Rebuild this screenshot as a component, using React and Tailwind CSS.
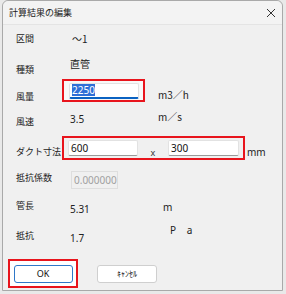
import React from 'react';

const jp = { fontFamily: '"Noto Sans CJK JP", "Noto Sans", sans-serif' };
const ui = { fontFamily: '"Noto Sans", "Noto Sans CJK JP", sans-serif' };

function Label({ children, top = 0 }) {
  return (
    <div className="w-[46px] shrink-0 text-[9px] leading-none text-[#222]" style={{ ...jp, marginTop: top }}>
      {children}
    </div>
  );
}

function TextBox({ value, width, selected }) {
  return (
    <div
      className={`h-[16px] bg-white border border-[#e2e2e2] flex items-center px-[2px] text-[10px] text-[#111] rounded-[2px] ${
        selected ? 'border-b-2 border-b-[#0a62c2]' : 'border-b-[#9a9a9a]'
      }`}
      style={{ ...ui, width }}
    >
      {selected ? <span className="bg-[#2f6fd6] text-white leading-[12px]">{value}</span> : value}
    </div>
  );
}

export default function App() {
  return (
    <div className="w-[286px] h-[294px] bg-[#e9e9e9] pl-[2px] pr-[3px] pb-[3px]">
      <div className="w-full h-full bg-[#f0f0f0] border border-[#a9a9a9] rounded-t-[6px] flex flex-col">
        {/* タイトルバー */}
        <div className="h-[24px] shrink-0 flex items-center justify-between pl-[6px] pr-[6px] bg-[#f3f3f3] border-b border-[#e4e4e4] rounded-t-[6px]">
          <span className="text-[9px] text-[#222]" style={jp}>計算結果の編集</span>
          <svg width="10" height="10" viewBox="0 0 10 10">
            <path d="M1 1 L9 9 M9 1 L1 9" stroke="#333" strokeWidth="1" />
          </svg>
        </div>

        <div className="pl-[13px] flex flex-col">
          {/* 区間 */}
          <div className="h-[28px] flex items-start">
            <Label top={9}>区間</Label>
            <div className="ml-[10px] mt-[9px] text-[10px] leading-none text-[#222]" style={jp}>～1</div>
          </div>

          {/* 種類 */}
          <div className="h-[20px] flex items-start">
            <Label top={12}>種類</Label>
            <div className="ml-[8px] mt-[6px] text-[10px] leading-none text-[#222]" style={jp}>直管</div>
          </div>

          {/* 風量 */}
          <div className="h-[32px] flex items-start">
            <Label top={19}>風量</Label>
            <div className="mt-[6px] border-2 border-[#e8141c] bg-[#f8f8f8] w-[83px] h-[23px] flex items-center pl-[5px]">
              <TextBox value="2250" width={70} selected />
            </div>
            <div className="ml-[13px] mt-[14px] text-[10px] text-[#222]" style={jp}>m3／h</div>
          </div>

          {/* 風速 */}
          <div className="h-[30px] flex items-start">
            <Label top={12}>風速</Label>
            <div className="ml-[8px] w-[88px] mt-[9px] text-[10px] leading-none text-[#222]" style={ui}>3.5</div>
            <div className="mt-[7px] text-[10px] leading-none text-[#222]" style={jp}>m／s</div>
          </div>

          {/* ダクト寸法 */}
          <div className="h-[30px] flex items-start">
            <Label top={12}>ダクト寸法</Label>
            <div className="mt-[1px] border-2 border-[#e8141c] w-[183px] h-[24px] flex items-center pl-[4px]">
              <TextBox value="600" width={70} />
              <div className="w-[30px] text-center text-[9px] text-[#333] mt-[9px]" style={ui}>x</div>
              <TextBox value="300" width={71} />
            </div>
            <div className="ml-[2px] mt-[12px] text-[10px] leading-none text-[#222]" style={ui}>mm</div>
          </div>

          {/* 抵抗係数 */}
          <div className="h-[25px] flex items-start">
            <Label top={8}>抵抗係数</Label>
            <div
              className="ml-[9px] mt-[6px] w-[47px] h-[18px] border border-[#dedede] bg-[#f0f0f0] flex items-center px-[2px] text-[10px] text-[#a0a0a0]"
              style={ui}
            >
              0.000000
            </div>
          </div>

          {/* 管長 */}
          <div className="h-[30px] flex items-start">
            <Label top={11}>管長</Label>
            <div className="ml-[8px] w-[88px] mt-[14px] text-[10px] leading-none text-[#222]" style={ui}>5.31</div>
            <div className="ml-[5px] mt-[12px] text-[10px] leading-none text-[#222]" style={ui}>m</div>
          </div>

          {/* 抵抗 */}
          <div className="h-[24px] flex items-start">
            <Label top={11}>抵抗</Label>
            <div className="ml-[8px] w-[88px] mt-[13px] text-[10px] leading-none text-[#222]" style={ui}>1.7</div>
            <div className="ml-[12px] mt-[5px] text-[10px] leading-none text-[#222] tracking-[4px]" style={ui}>P a</div>
          </div>
        </div>

        {/* ボタン */}
        <div className="mt-auto mb-[2px] pl-[5px] flex items-center">
          <div className="border-2 border-[#e8141c] bg-white w-[70px] h-[29px] flex items-center justify-center">
            <button className="w-[59px] h-[18px] bg-white border border-[#2f78c8] rounded-[3px] text-[9px] text-[#111]" style={ui}>
              OK
            </button>
          </div>
          <button
            className="ml-[19px] w-[60px] h-[18px] bg-white border border-[#cfcfcf] rounded-[3px] text-[8px] text-[#111]"
            style={jp}
          >
            ｷｬﾝｾﾙ
          </button>
        </div>
      </div>
    </div>
  );
}
